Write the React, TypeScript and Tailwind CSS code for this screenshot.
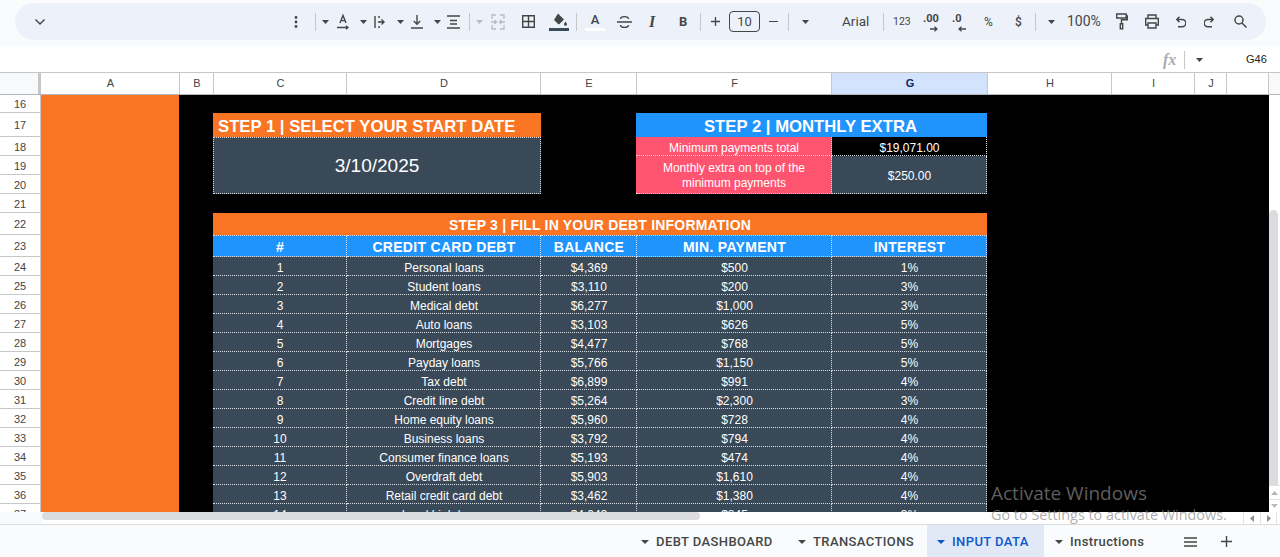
import type { ReactNode } from "react";

const debts = [
  ["1", "Personal loans", "$4,369", "$500", "1%"],
  ["2", "Student loans", "$3,110", "$200", "3%"],
  ["3", "Medical debt", "$6,277", "$1,000", "3%"],
  ["4", "Auto loans", "$3,103", "$626", "5%"],
  ["5", "Mortgages", "$4,477", "$768", "5%"],
  ["6", "Payday loans", "$5,766", "$1,150", "5%"],
  ["7", "Tax debt", "$6,899", "$991", "4%"],
  ["8", "Credit line debt", "$5,264", "$2,300", "3%"],
  ["9", "Home equity loans", "$5,960", "$728", "4%"],
  ["10", "Business loans", "$3,792", "$794", "4%"],
  ["11", "Consumer finance loans", "$5,193", "$474", "4%"],
  ["12", "Overdraft debt", "$5,903", "$1,610", "4%"],
  ["13", "Retail credit card debt", "$3,462", "$1,380", "4%"],
  ["14", "Land high loans", "$4,043", "$845", "3%"],
];

const rowHeaders: [string, string][] = [
  ["16", "h-[18px]"],
  ["17", "h-[24px]"],
  ["18", "h-[19px]"],
  ["19", "h-[19px]"],
  ["20", "h-[19px]"],
  ["21", "h-[19px]"],
  ["22", "h-[22px]"],
  ["23", "h-[22px]"],
  ["24", "h-[19px]"],
  ["25", "h-[19px]"],
  ["26", "h-[19px]"],
  ["27", "h-[19px]"],
  ["28", "h-[19px]"],
  ["29", "h-[19px]"],
  ["30", "h-[19px]"],
  ["31", "h-[19px]"],
  ["32", "h-[19px]"],
  ["33", "h-[19px]"],
  ["34", "h-[19px]"],
  ["35", "h-[19px]"],
  ["36", "h-[19px]"],
  ["37", "h-[19px]"],
];

const columns = [
  { name: "A", cls: "w-[139px]" },
  { name: "B", cls: "w-[34px]" },
  { name: "C", cls: "w-[133px]" },
  { name: "D", cls: "w-[194px]" },
  { name: "E", cls: "w-[96px]" },
  { name: "F", cls: "w-[195px]" },
  { name: "G", cls: "w-[156px] bg-[#d3e3fd] font-bold text-[#0b2a66]" },
  { name: "H", cls: "w-[124px]" },
  { name: "I", cls: "w-[83px]" },
  { name: "J", cls: "w-[32px]" },
  { name: "", cls: "w-[42px]" },
];

function Icon({ w, h = 18, children }: { w: number; h?: number; children: ReactNode }) {
  return (
    <svg width={w} height={h} viewBox={`0 0 ${w} ${h}`} fill="none" stroke="#444746" strokeWidth="1.4" className="shrink-0">
      {children}
    </svg>
  );
}

function Caret({ className = "", light = false }: { className?: string; light?: boolean }) {
  return (
    <svg width="7" height="4" viewBox="0 0 7 4" className={`shrink-0 ${className}`}>
      <path d="M0 0h7L3.5 4z" fill={light ? "#b9bcbf" : "#444746"} />
    </svg>
  );
}

function Sep({ className = "" }: { className?: string }) {
  return <div className={`h-[18px] w-px shrink-0 bg-[#c7c7c7] ${className}`} />;
}

function Toolbar() {
  return (
    <div className="h-[47px] bg-[#f9fbfd] px-[15px] pt-[3px]">
      <div className="flex h-[37px] w-[1251px] items-center rounded-full bg-[#edf2fa] text-[#444746]">
        <svg width="12" height="8" viewBox="0 0 12 8" fill="none" stroke="#444746" strokeWidth="1.5" className="ml-[19px] shrink-0">
          <path d="M1.5 1.5 6 6l4.5-4.5" />
        </svg>
        <svg width="4" height="12" viewBox="0 0 4 12" fill="#444746" className="ml-[248px] shrink-0">
          <circle cx="2" cy="1.5" r="1.4" />
          <circle cx="2" cy="6" r="1.4" />
          <circle cx="2" cy="10.5" r="1.4" />
        </svg>
        <Sep className="ml-[17px]" />
        <Caret className="ml-[6px]" />
        <div className="ml-[8px]">
          <Icon w={12}>
            <path d="M3 10 6 2.5 9 10M4 7.6h4" />
            <path d="M0 14.5h10M9 12.7l2 1.8-2 1.8" />
          </Icon>
        </div>
        <Caret className="ml-[11px]" />
        <div className="ml-[7px]">
          <Icon w={11}>
            <path d="M1 3v12M5 3v2M5 8v2M5 13v2M5 9h5M7.5 6.5 10 9l-2.5 2.5" />
          </Icon>
        </div>
        <Caret className="ml-[12px]" />
        <div className="ml-[7px]">
          <Icon w={12}>
            <path d="M6 2v9M2.8 8 6 11.2 9.2 8M0 15h12" />
          </Icon>
        </div>
        <Caret className="ml-[11px]" />
        <div className="ml-[6px]">
          <Icon w={13}>
            <path d="M0 3h13M3 7.5h7M3 11h7M0 15h13" strokeWidth="1.7" />
          </Icon>
        </div>
        <Sep className="ml-[9px]" />
        <Caret light className="ml-[6px]" />
        <div className="ml-[8px]">
          <svg width="14" height="16" viewBox="0 0 14 16" fill="none" stroke="#b9bcbf" strokeWidth="1.3" className="shrink-0">
            <path d="M1 5V1h4M9 1h4v4M1 11v4h4M9 15h4v-4M0 8h5M3.5 6 5.5 8l-2 2M14 8H9M10.5 6l-2 2 2 2" />
          </svg>
        </div>
        <div className="ml-[17px]">
          <svg width="13" height="13" viewBox="0 0 13 13" fill="none" stroke="#444746" strokeWidth="1.4" className="shrink-0">
            <path d="M.7.7h11.6v11.6H.7zM6.5.7v11.6M.7 6.5h11.6" />
          </svg>
        </div>
        <div className="ml-[14px]">
          <svg width="20" height="20" viewBox="0 0 20 20" className="shrink-0">
            <path d="M9 1.5 15 7.5l-4.5 4.5a1 1 0 0 1-1.4 0L5 8z" fill="#444746" />
            <path d="M16.5 9.5c1 1.4 1.5 2.1 1.5 2.8a1.5 1.5 0 0 1-3 0c0-.7.5-1.4 1.5-2.8z" fill="#444746" />
            <rect x="0" y="16" width="20" height="3" fill="#3c4b5a" />
          </svg>
        </div>
        <Sep className="ml-[7px]" />
        <div className="ml-[8px] flex w-[20px] shrink-0 flex-col items-center">
          <span className="font-['Roboto',sans-serif] text-[13px] leading-[15px] font-medium">A</span>
          <span className="mt-[1px] h-[3px] w-full bg-white" />
        </div>
        <div className="ml-[12px]">
          <Icon w={15}>
            <path d="M0 9h15M3.5 6c0-3.2 8-3.2 8 0M3.5 12c0 3.2 8 3.2 8 0" />
          </Icon>
        </div>
        <span className="ml-[17px] w-[8px] shrink-0 font-['Liberation_Serif',serif] text-[16px] leading-none font-bold italic">I</span>
        <span className="ml-[22px] w-[8px] shrink-0 font-['Roboto',sans-serif] text-[13px] leading-none font-bold">B</span>
        <Sep className="ml-[13px]" />
        <svg width="9" height="9" viewBox="0 0 9 9" stroke="#444746" strokeWidth="1.3" className="ml-[10px] shrink-0">
          <path d="M4.5 0v9M0 4.5h9" />
        </svg>
        <div className="ml-[9px] flex h-[21px] w-[31px] shrink-0 items-center justify-center rounded-[4px] border border-[#444746] font-['Roboto',sans-serif] text-[13px]">
          10
        </div>
        <div className="ml-[9px] h-[1.4px] w-[9px] shrink-0 bg-[#444746]" />
        <Sep className="ml-[10px]" />
        <Caret className="ml-[13px]" />
        <span className="ml-[33px] w-[27px] shrink-0 font-['Roboto',sans-serif] text-[13.5px] whitespace-nowrap">Arial</span>
        <Sep className="ml-[14px]" />
        <span className="ml-[9px] w-[17px] shrink-0 font-['Roboto',sans-serif] text-[10.5px] whitespace-nowrap">123</span>
        <div className="relative ml-[13px] h-[20px] w-[16px] shrink-0 font-['Roboto',sans-serif] text-[11px] leading-[14px] font-bold">
          <span className="block">.00</span>
          <svg width="8" height="6" viewBox="0 0 8 6" fill="none" stroke="#444746" strokeWidth="1.3" className="ml-[7px]">
            <path d="M0 3h7M4.5.7 7 3 4.5 5.3" />
          </svg>
        </div>
        <div className="ml-[13px] h-[20px] w-[15px] shrink-0 font-['Roboto',sans-serif] text-[11px] leading-[14px] font-bold">
          <span className="block">.0</span>
          <svg width="8" height="6" viewBox="0 0 8 6" fill="none" stroke="#444746" strokeWidth="1.3" className="ml-[6px]">
            <path d="M8 3H1M3.5.7 1 3l2.5 2.3" />
          </svg>
        </div>
        <span className="ml-[17px] w-[10px] shrink-0 font-['Roboto',sans-serif] text-[12px] whitespace-nowrap">%</span>
        <span className="ml-[21px] w-[7px] shrink-0 font-['Roboto',sans-serif] text-[12px] font-medium whitespace-nowrap">$</span>
        <Sep className="ml-[13px]" />
        <Caret className="ml-[12px]" />
        <span className="ml-[12px] w-[33px] shrink-0 font-['Roboto',sans-serif] text-[14px] whitespace-nowrap">100%</span>
        <div className="ml-[16px]">
          <Icon w={12} h={17}>
            <path d="M.7 1h9.5v4H.7zM10.2 3h1.2v3.7H5.5v4" />
            <path d="M4.3 10.7h2.4v5H4.3z" />
          </Icon>
        </div>
        <div className="ml-[17px]">
          <Icon w={14} h={15}>
            <path d="M3 4V1h8v3M3 11H.7V4.5h12.6V11H11M3 9h8v5H3z" />
          </Icon>
        </div>
        <div className="ml-[17px]">
          <Icon w={10} h={12}>
            <path d="M3.5.8.8 3.5l2.7 2.7M1 3.5h5.2a3.2 3.2 0 0 1 0 7.2H2" />
          </Icon>
        </div>
        <div className="ml-[18px]">
          <Icon w={10} h={12}>
            <path d="M6.5.8l2.7 2.7-2.7 2.7M9 3.5H3.8a3.2 3.2 0 0 0 0 7.2H8" />
          </Icon>
        </div>
        <div className="ml-[20px]">
          <svg width="13" height="13" viewBox="0 0 13 13" fill="none" stroke="#444746" strokeWidth="1.5" className="shrink-0">
            <circle cx="5" cy="5" r="4" />
            <path d="M8 8l4.5 4.5" />
          </svg>
        </div>
      </div>
    </div>
  );
}

function FormulaBar() {
  return (
    <div className="flex h-[26px] items-center border-b border-[#c7c7c7] bg-white">
      <span className="ml-[1163px] w-[14px] font-['Liberation_Serif',serif] text-[16px] font-bold text-[#a8acb0] italic">fx</span>
      <Sep className="ml-[7px] h-[16px]" />
      <Caret className="ml-[11px]" />
      <span className="ml-[43px] font-['Liberation_Sans',sans-serif] text-[11px] text-[#222]">G46</span>
    </div>
  );
}

function ColumnHeader() {
  return (
    <div className="flex h-[22px] border-b border-[#b4b7ba] bg-white font-['Liberation_Sans',sans-serif] text-[11px] text-[#444]">
      <div className="w-[41px] shrink-0 border-r-[3px] border-[#c4c7c5] bg-[#f8f9fa]" />
      {columns.map((col, i) => (
        <div key={i} className={`flex shrink-0 items-center justify-center border-r border-[#c7c7c7] pl-[1px] ${col.cls}`}>
          {col.name}
        </div>
      ))}
      <div className="flex-1 bg-[#f8f9fa]" />
    </div>
  );
}

function DebtTable() {
  return (
    <div className="mt-[19px] w-[774px] text-white">
      <div className="flex h-[22px] items-center justify-center bg-[#f97423] pt-[2px] text-[14px] leading-none font-bold tracking-[0.2px]">
        STEP 3 | FILL IN YOUR DEBT INFORMATION
      </div>
      <div className="grid h-[22px] grid-cols-[134px_194px_96px_195px_155px] bg-[#2094fd] text-[14px] leading-none font-bold tracking-[0.3px]">
        {["#", "CREDIT CARD DEBT", "BALANCE", "MIN. PAYMENT", "INTEREST"].map((h) => (
          <div key={h} className="flex items-center justify-center border-t border-r border-b border-dotted border-[#d7dde2] pt-[2px] pl-[1px]">
            {h}
          </div>
        ))}
      </div>
      {debts.map((row) => (
        <div key={row[0]} className="grid h-[19px] grid-cols-[134px_194px_96px_195px_155px] bg-[#394957] text-[12px] leading-none">
          {row.map((cell, i) => (
            <div key={i} className="flex items-center justify-center border-r border-b border-dotted border-[#d7dde2] pt-[3px] pl-[1px]">
              {cell}
            </div>
          ))}
        </div>
      ))}
    </div>
  );
}

function Sheet() {
  return (
    <div className="flex h-[417px] overflow-hidden">
      <div className="w-[41px] shrink-0 border-r border-[#c7c7c7] bg-white font-['Liberation_Sans',sans-serif] text-[11px] text-[#444]">
        {rowHeaders.map(([n, h]) => (
          <div key={n} className={`flex items-center justify-center border-b border-[#c7c7c7] pt-[2px] ${h}`}>
            {n}
          </div>
        ))}
      </div>
      <div className="w-[138px] shrink-0 bg-[#f97423]" />
      <div className="w-[1090px] shrink-0 bg-black pt-[18px] pl-[34px] font-['Liberation_Sans',sans-serif]">
        <div className="flex text-white">
          <div className="w-[328px]">
            <div className="flex h-[24px] items-center bg-[#f97423] pt-[4px] pl-[5px] text-[16.7px] leading-none font-bold">STEP 1 | SELECT YOUR START DATE</div>
            <div className="flex h-[57px] items-center justify-center border border-dotted border-[#d7dde2] bg-[#394957] pt-[2px] text-[19px]">3/10/2025</div>
          </div>
          <div className="ml-[95px] w-[351px]">
            <div className="flex h-[24px] items-center justify-center bg-[#2094fd] pt-[4px] pr-[2px] text-[16.7px] leading-none font-bold">STEP 2 | MONTHLY EXTRA</div>
            <div className="grid h-[19px] grid-cols-[196px_155px] text-[12px] leading-none">
              <div className="flex items-center justify-center border-r border-b border-dotted border-[#d7dde2] bg-[#ff5470] pt-[3px] pl-[1px]">Minimum payments total</div>
              <div className="flex items-center justify-center border-r border-b border-dotted border-[#d7dde2] bg-black pt-[3px] pl-[1px]">$19,071.00</div>
            </div>
            <div className="grid h-[38px] grid-cols-[196px_155px] text-[12px]">
              <div className="flex items-center justify-center border-r border-b border-dotted border-[#d7dde2] bg-[#ff5470] pt-[3px] pl-[1px] text-center leading-[15px]">
                Monthly extra on top of the
                <br />
                minimum payments
              </div>
              <div className="flex items-center justify-center border-r border-b border-dotted border-[#d7dde2] bg-[#394957] pt-[3px] pl-[1px]">$250.00</div>
            </div>
          </div>
        </div>
        <DebtTable />
      </div>
      <div className="flex flex-1 flex-col bg-white">
        <div className="h-[115px]" />
        <div className="h-[275px] w-[9px] rounded-t-full bg-[#dadce0]" />
        <div className="flex h-[14px] items-center justify-center border-t border-[#e3e3e3]">
          <svg width="7" height="4" viewBox="0 0 7 4"><path d="M0 4h7L3.5 0z" fill="#b4b7ba" /></svg>
        </div>
        <div className="flex h-[13px] items-center justify-center border-t border-[#e3e3e3]">
          <Caret light />
        </div>
      </div>
    </div>
  );
}

function HScroll() {
  return (
    <div className="flex h-[13px] border-b border-[#dadce0] bg-white">
      <div className="w-[42px] shrink-0 bg-[#f8f9fa]" />
      <div className="h-[8px] w-[658px] shrink-0 rounded-full bg-[#dadce0]" />
      <div className="ml-[543px] flex h-[12px] w-[17px] shrink-0 items-center justify-center border-l border-[#e3e3e3]">
        <svg width="4" height="7" viewBox="0 0 4 7"><path d="M4 0v7L0 3.5z" fill="#8a8d90" /></svg>
      </div>
      <div className="flex h-[12px] w-[17px] shrink-0 items-center justify-center border-x border-[#e3e3e3]">
        <svg width="4" height="7" viewBox="0 0 4 7"><path d="M0 0v7l4-3.5z" fill="#8a8d90" /></svg>
      </div>
    </div>
  );
}

function Tab({ label, cls, active = false }: { label: string; cls: string; active?: boolean }) {
  return (
    <div className={`flex h-full shrink-0 items-center ${cls} ${active ? "bg-[#e1e9f7] text-[#0b57d0]" : "text-[#444746]"}`}>
      <svg width="8" height="4" viewBox="0 0 8 4" className="shrink-0">
        <path d="M0 0h8L4 4z" fill={active ? "#0b57d0" : "#444746"} />
      </svg>
      <span className="ml-[7px] whitespace-nowrap">{label}</span>
    </div>
  );
}

function TabBar() {
  return (
    <div className="flex h-[33px] items-center bg-[#f9fbfd] font-['Roboto',sans-serif] text-[13px] font-medium tracking-[0.4px]">
      <div className="w-[641px] shrink-0" />
      <Tab label="DEBT DASHBOARD" cls="w-[157px]" />
      <Tab label="TRANSACTIONS" cls="w-[129px]" />
      <Tab label="INPUT DATA" cls="w-[117px] pl-[10px]" active />
      <Tab label="Instructions" cls="ml-[11px] w-[129px]" />
      <svg width="13" height="10" viewBox="0 0 13 10" stroke="#444746" strokeWidth="1.4" className="shrink-0">
        <path d="M0 1h13M0 5h13M0 9h13" />
      </svg>
      <svg width="11" height="11" viewBox="0 0 11 11" stroke="#444746" strokeWidth="1.4" className="ml-[24px] shrink-0">
        <path d="M5.5 0v11M0 5.5h11" />
      </svg>
    </div>
  );
}

export default function App() {
  return (
    <div className="relative h-[557px] w-[1280px] overflow-hidden bg-white">
      <Toolbar />
      <FormulaBar />
      <ColumnHeader />
      <Sheet />
      <HScroll />
      <TabBar />
      {/* windows watermark sits over the sheet */}
      <div className="pointer-events-none absolute top-[480px] left-[991px] font-['Open_Sans',sans-serif] text-[#8a8a8a]/70">
        <div className="text-[19px] leading-[26px]">Activate Windows</div>
        <div className="text-[14.4px] leading-[18px] whitespace-nowrap">Go to Settings to activate Windows.</div>
      </div>
    </div>
  );
}
